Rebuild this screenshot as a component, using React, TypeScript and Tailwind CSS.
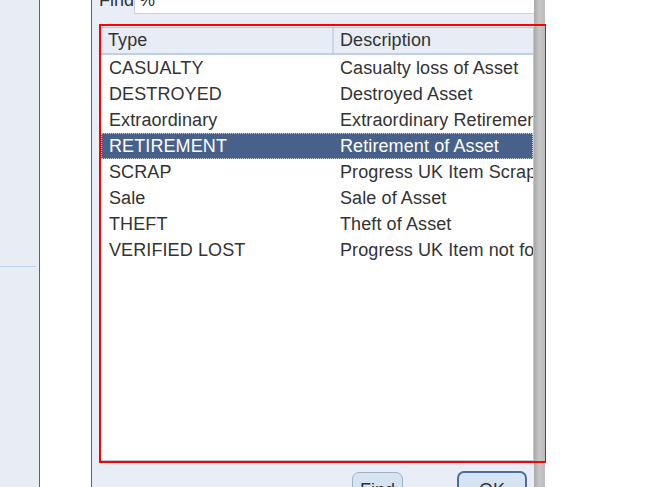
const rows = [
  { type: 'CASUALTY', desc: 'Casualty loss of Asset' },
  { type: 'DESTROYED', desc: 'Destroyed Asset' },
  { type: 'Extraordinary', desc: 'Extraordinary Retirement' },
  { type: 'RETIREMENT', desc: 'Retirement of Asset', selected: true },
  { type: 'SCRAP', desc: 'Progress UK Item Scrapped' },
  { type: 'Sale', desc: 'Sale of Asset' },
  { type: 'THEFT', desc: 'Theft of Asset' },
  { type: 'VERIFIED LOST', desc: 'Progress UK Item not found' },
];

export default function App() {
  return (
    <div className="relative flex w-[646px] h-[487px] overflow-hidden bg-white text-[18px] text-[#333] font-['Liberation_Sans',Arial,sans-serif]">
      {/* left nav strip */}
      <div className="w-[39px] shrink-0 bg-[#e8edf5]">
        <div className="h-[267px] mr-[3px] border-b border-[#bcd0ea]" />
      </div>
      <div className="w-[53px] shrink-0 bg-white border-l border-r border-[#4a6590]" />

      {/* dialog */}
      <div className="w-[442px] shrink-0 flex flex-col bg-[#e9eef6] pl-[8px]">
        <div className="flex shrink-0 items-start -mt-[10px] h-[24px]">
          <span className="ml-[-1px] leading-[21px] w-[36px]">Find</span>
          <div className="flex-1 h-[24px] ml-[-1px] bg-white border-l border-b border-[#c4d2e4] pl-[4px] leading-[21px]">
            %
          </div>
        </div>

        <div className="mt-[13px] h-[434px] shrink-0 flex flex-col bg-white border border-[#b9c9dd] overflow-hidden whitespace-nowrap tracking-[0.1px]">
          <div className="flex h-[27px] shrink-0 bg-[#e8edf5] border-b-2 border-[#bccfe6] leading-[25px]">
            <div className="w-[233px] shrink-0 pl-[7px] border-r-2 border-[#c8d6e8]">Type</div>
            <div className="pl-[6px]">Description</div>
          </div>
          {rows.map((r) => (
            <div
              key={r.type}
              className={
                r.selected
                  ? 'flex shrink-0 h-[26px] leading-[24px] bg-[#47618a] text-white border border-dotted border-[#c9d2e0]'
                  : 'flex shrink-0 h-[26px] leading-[26px]'
              }
            >
              <div className={r.selected ? 'w-[232px] shrink-0 pl-[7px]' : 'w-[233px] shrink-0 pl-[8px]'}>
                {r.type}
              </div>
              <div className="pl-[6px]">{r.desc}</div>
            </div>
          ))}
        </div>

        <div className="flex shrink-0 justify-end items-start mt-[11px] pr-[7px] gap-[54px]">
          <div className="w-[51px] h-[28px] rounded-[7px] border border-[#9fb2ca] bg-[#d5e3f2] text-center leading-[34px]">
            Find
          </div>
          <div className="w-[70px] h-[30px] -mt-[1px] rounded-[7px] border-2 border-[#4d6d98] bg-[#d5e3f2] text-center leading-[34px]">
            OK
          </div>
        </div>
      </div>

      {/* dialog edge */}
      <div className="w-[11px] shrink-0 bg-gradient-to-r from-[#a9a9a9] via-[#c6c6c6] to-[#bcbcbc]" />

      {/* red annotation box */}
      <div className="absolute left-[99px] top-[24px] w-[447px] h-[439px] border-2 border-r border-[#ff0000]" />
    </div>
  );
}
